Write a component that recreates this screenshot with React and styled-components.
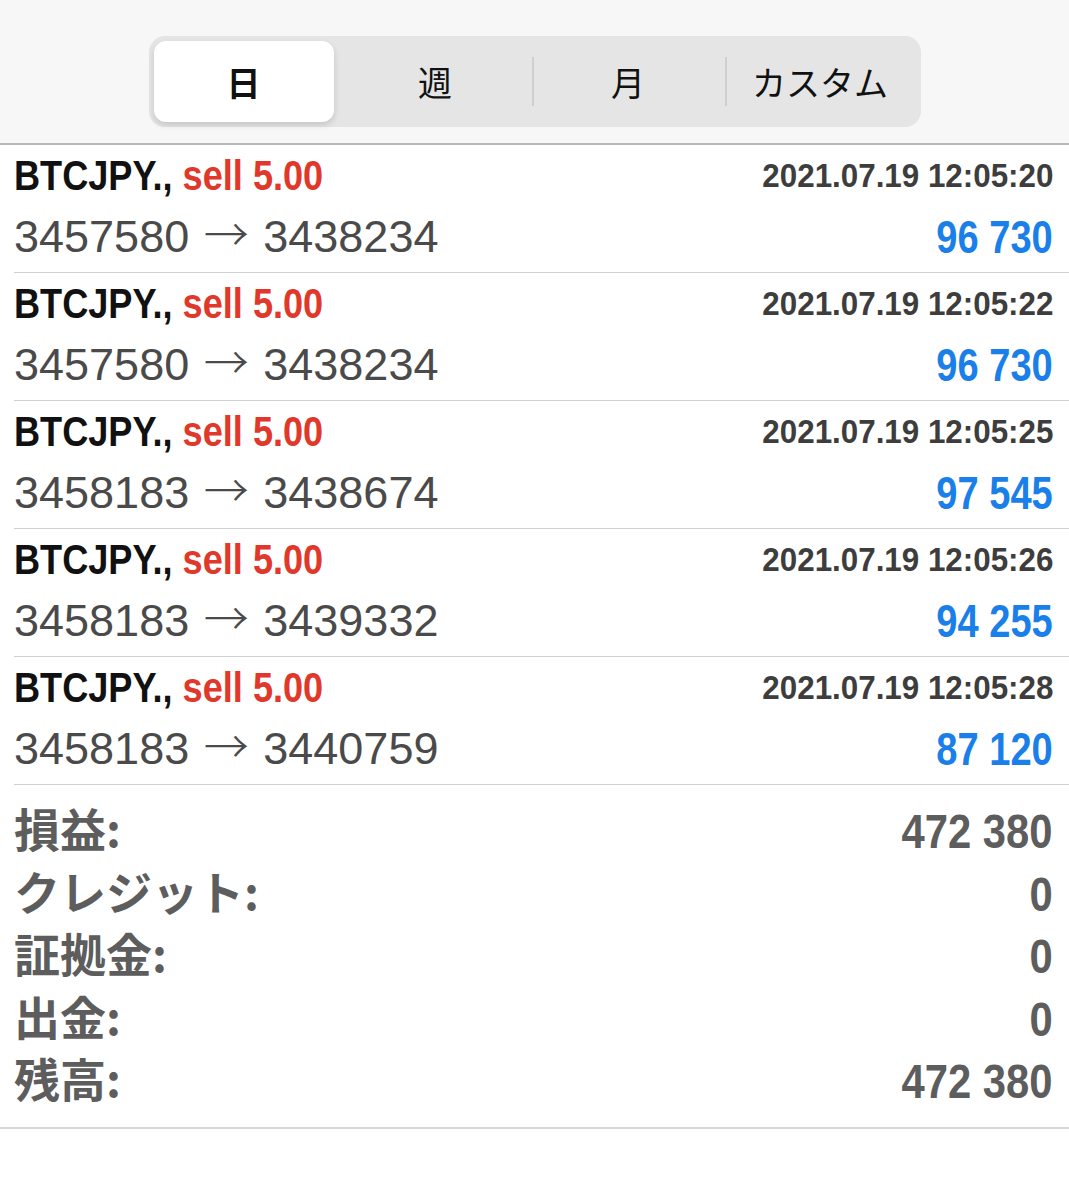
import React from "react";
import styled, { createGlobalStyle } from "styled-components";

const GlobalStyle = createGlobalStyle`
  body {
    margin: 0;
    background: #ffffff;
    font-family: "Liberation Sans", "Noto Sans CJK JP", sans-serif;
  }
`;

// condensed bold look: Liberation Sans Bold squeezed horizontally
const Squeeze = styled.span`
  display: inline-block;
  white-space: nowrap;
  transform: scaleX(${(p) => p.$x});
  transform-origin: ${(p) => (p.$right ? "right" : "left")} center;
`;

const Header = styled.div`
  height: 145px;
  box-sizing: border-box;
  padding-top: 36px;
  background: #f7f7f7;
  border-bottom: 2px solid #b8b8b8;
`;

const Segmented = styled.div`
  width: 772px;
  height: 91px;
  margin: 0 auto;
  box-sizing: border-box;
  padding: 5px;
  border-radius: 16px;
  background: #e5e5e5;
  display: grid;
  grid-template-columns: 185px 193px 193px 191px;
  align-items: center;
`;

const Segment = styled.div`
  height: 81px;
  display: flex;
  align-items: center;
  justify-content: center;
  font-family: "Noto Sans CJK JP", sans-serif;
  font-size: 34px;
  color: #111;
  font-weight: ${(p) => (p.$active ? 700 : 400)};
  background: ${(p) => (p.$active ? "#ffffff" : "transparent")};
  border-radius: 12px;
  box-shadow: ${(p) => (p.$active ? "0 3px 6px rgba(0,0,0,0.14)" : "none")};
  margin-right: ${(p) => (p.$active ? "5px" : "0")};
  position: relative;
  &::before {
    content: "";
    display: ${(p) => (p.$divider ? "block" : "none")};
    position: absolute;
    left: 0;
    top: 16px;
    bottom: 16px;
    width: 2px;
    background: #cfcfcf;
  }
`;

const Trade = styled.div`
  margin-left: 14px;
  padding-right: 16px;
  height: 128px;
  box-sizing: border-box;
  border-bottom: 1px solid #d2d2d2;
  display: grid;
  grid-template-columns: 1fr auto;
  grid-template-rows: 62px 65px;
`;

const Symbol = styled.div`
  font-weight: 700;
  font-size: 42px;
  line-height: 62px;
  color: #111;
  span span {
    color: #e0382a;
  }
`;

const Time = styled.div`
  font-weight: 700;
  font-size: 33px;
  line-height: 62px;
  color: #3d3d3d;
  text-align: right;
`;

const Prices = styled.div`
  font-size: 45px;
  line-height: 59px;
  padding-bottom: 6px;
  color: #4a4a4a;
  white-space: nowrap;
`;

const Arrow = styled.span`
  font-family: "Noto Sans CJK JP", sans-serif;
  font-weight: 300;
  line-height: 1;
  margin: 0 2px;
`;

const Profit = styled.div`
  font-weight: 700;
  font-size: 47px;
  line-height: 59px;
  padding-bottom: 8px;
  color: #1a7fe8;
  text-align: right;
`;

const Summary = styled.div`
  padding: 16px 16px 13px 14px;
  border-bottom: 2px solid #d8d8d8;
  color: #5d5d5d;
`;

const SummaryRow = styled.div`
  height: 62.5px;
  display: flex;
  align-items: center;
  justify-content: space-between;
`;

const Label = styled.div`
  font-family: "Noto Sans CJK JP", sans-serif;
  font-weight: 700;
  font-size: 46px;
  line-height: 46px;
  padding-bottom: 10px;
`;

const Value = styled.div`
  font-weight: 700;
  font-size: 48px;
  line-height: 62.5px;
`;

const trades = [
  ["3457580", "3438234", "2021.07.19 12:05:20", "96 730"],
  ["3457580", "3438234", "2021.07.19 12:05:22", "96 730"],
  ["3458183", "3438674", "2021.07.19 12:05:25", "97 545"],
  ["3458183", "3439332", "2021.07.19 12:05:26", "94 255"],
  ["3458183", "3440759", "2021.07.19 12:05:28", "87 120"],
];

const totals = [
  ["損益:", "472 380"],
  ["クレジット:", "0"],
  ["証拠金:", "0"],
  ["出金:", "0"],
  ["残高:", "472 380"],
];

export default function App() {
  return (
    <>
      <GlobalStyle />
      <Header>
        <Segmented>
          <Segment $active>日</Segment>
          <Segment>週</Segment>
          <Segment $divider>月</Segment>
          <Segment $divider>カスタム</Segment>
        </Segmented>
      </Header>
      {trades.map(([from, to, time, profit], i) => (
        <Trade key={i}>
          <Symbol>
            <Squeeze $x={0.86}>
              BTCJPY., <span>sell 5.00</span>
            </Squeeze>
          </Symbol>
          <Time>
            <Squeeze $x={0.95} $right>
              {time}
            </Squeeze>
          </Time>
          <Prices>
            {from} <Arrow>→</Arrow> {to}
          </Prices>
          <Profit>
            <Squeeze $x={0.81} $right>
              {profit}
            </Squeeze>
          </Profit>
        </Trade>
      ))}
      <Summary>
        {totals.map(([label, value]) => (
          <SummaryRow key={label}>
            <Label>{label}</Label>
            <Value>
              <Squeeze $x={0.87} $right>
                {value}
              </Squeeze>
            </Value>
          </SummaryRow>
        ))}
      </Summary>
    </>
  );
}
